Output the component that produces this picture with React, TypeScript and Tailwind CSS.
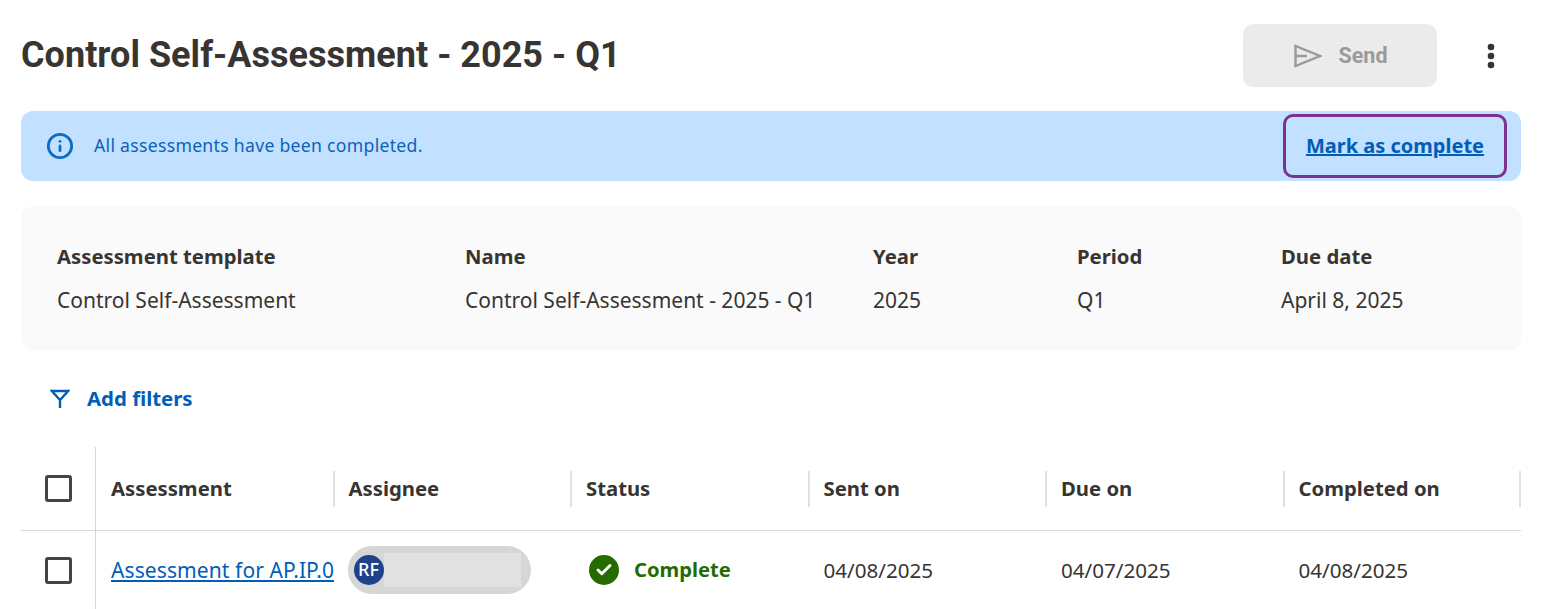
import { Check, Info } from 'lucide-react';

const columns = ['Assessment', 'Assignee', 'Status', 'Sent on', 'Due on', 'Completed on'];

const details = [
  { label: 'Assessment template', value: 'Control Self-Assessment', width: 'w-[408px]' },
  { label: 'Name', value: 'Control Self-Assessment - 2025 - Q1', width: 'w-[408px]' },
  { label: 'Year', value: '2025', width: 'w-[204px]' },
  { label: 'Period', value: 'Q1', width: 'w-[204px]' },
  { label: 'Due date', value: 'April 8, 2025', width: 'w-[204px]' },
];

function Checkbox() {
  return <div className="w-[27px] h-[27px] rounded-[3px] border-[3px] border-[#444444] bg-white" />;
}

export default function App() {
  return (
    <div className="w-[1543px] h-[609px] overflow-hidden bg-white pl-[21px] pr-[22px] text-[#373432] font-['Noto_Sans','Open_Sans',sans-serif]">
      {/* Titre + actions */}
      <div className="flex items-center justify-between h-[111px]">
        <h1 className="font-['Roboto',sans-serif] text-[36px] font-bold tracking-[0.03px] mb-[2px]">Control Self-Assessment - 2025 - Q1</h1>
        <div className="flex items-center">
          <button className="w-[194px] h-[63px] pl-[2px] rounded-[10px] bg-[#ebebeb] flex items-center justify-center gap-[16px] text-[#9c9a98] text-[21.5px] font-bold font-['Roboto',sans-serif]">
            <svg width="28" height="24" viewBox="0 0 28 24" fill="none" stroke="#9c9a98" strokeWidth="2.4">
              <path d="M1.5 2v20L26 12zM1.5 12H13" />
            </svg>
            <span className="pt-[1px]">Send</span>
          </button>
          <button className="ml-[42px] mr-[18px] w-[24px] flex justify-center">
            <svg width="10" height="26" viewBox="0 0 10 26" fill="#373432">
              <circle cx="5" cy="4" r="3.3" />
              <circle cx="5" cy="13" r="3.3" />
              <circle cx="5" cy="22" r="3.3" />
            </svg>
          </button>
        </div>
      </div>

      {/* Bandeau info */}
      <div className="h-[70px] rounded-[12px] bg-[#c2e0ff] flex items-center justify-between pl-[25px] pr-[14px] text-[#0b62b8]">
        <div className="flex items-center gap-[20px]">
          <Info size={28} strokeWidth={2.4} className="text-[#0f6cc4]" />
          <span className="text-[17.6px] tracking-[0.3px] pb-[1px]">All assessments have been completed.</span>
        </div>
        <a className="w-[224px] h-[64px] rounded-[10px] border-[3px] border-[#7f3095] flex items-center justify-center text-[20px] font-bold underline text-[#005eb8]">
          Mark as complete
        </a>
      </div>

      {/* Détails */}
      <div className="mt-[25px] h-[145px] rounded-[12px] bg-[#fafafa] flex items-center pl-[36px] pb-[1px]">
        {details.map((d) => (
          <div key={d.label} className={d.width}>
            <div className="text-[20.3px] font-bold leading-[28px] -mt-[1px]">{d.label}</div>
            <div className="text-[21px] leading-[28px] mt-[16px]">{d.value}</div>
          </div>
        ))}
      </div>

      {/* Filtres */}
      <div className="h-[96px] flex items-center pl-[29px] pb-[1px] gap-[17px] text-[#005eb8] text-[20.4px] font-bold">
        <svg width="20" height="20" viewBox="0 0 20 20" fill="none" stroke="#005eb8" strokeWidth="2.4">
          <path d="M1.8 2h16.4L10 11zM10 10v9" strokeLinejoin="miter" />
        </svg>
        Add filters
      </div>

      {/* Tableau */}
      <div className="grid grid-cols-[75px_1px_repeat(5,237.5px)_236.5px] grid-rows-[84px_79px] w-[1500px]">
        <div className="border-r border-b border-[#d6d6d6] flex items-center pl-[24px]">
          <Checkbox />
        </div>
        <div className="border-b border-[#d6d6d6]" />
        {columns.map((c) => (
          <div key={c} className="border-b border-[#d6d6d6] flex items-center h-full">
            <div className="flex-1 h-[36px] flex items-center justify-between pl-[14px] text-[20.3px] font-bold">
              {c}
              <span className="w-[2px] h-[36px] bg-[#e0e0e0]" />
            </div>
          </div>
        ))}

        <div className="border-r border-[#d6d6d6] flex items-center pl-[24px] pb-[1px]">
          <Checkbox />
        </div>
        <div />
        <div className="flex items-center pl-[14px] text-[21px] tracking-[0.1px] text-[#005eb8] underline whitespace-nowrap overflow-hidden">
          Assessment for AP.IP.0
        </div>
        <div className="flex items-center pl-[13px] pb-[2px]">
          <div className="w-[183px] h-[48px] rounded-full bg-[#d6d6d6] flex items-center pl-[6px]">
            <div className="w-[30px] h-[30px] rounded-full bg-[#1b428a] text-white text-[18px] font-medium flex items-center justify-center z-10">
              RF
            </div>
            <div className="w-[137px] h-[34px] bg-[#e1e1e1]" />
          </div>
        </div>
        <div className="flex items-center pl-[17px] pb-[2px] gap-[15px] text-[#256b00] text-[20.2px] font-bold">
          <div className="w-[30px] h-[30px] rounded-full bg-[#256b00] flex items-center justify-center">
            <Check size={18} strokeWidth={4} className="text-white" />
          </div>
          Complete
        </div>
        <div className="flex items-center pl-[14px] pb-[1px] text-[20.6px]">04/08/2025</div>
        <div className="flex items-center pl-[14px] pb-[1px] text-[20.6px]">04/07/2025</div>
        <div className="flex items-center pl-[14px] pb-[1px] text-[20.6px]">04/08/2025</div>
      </div>
    </div>
  );
}
